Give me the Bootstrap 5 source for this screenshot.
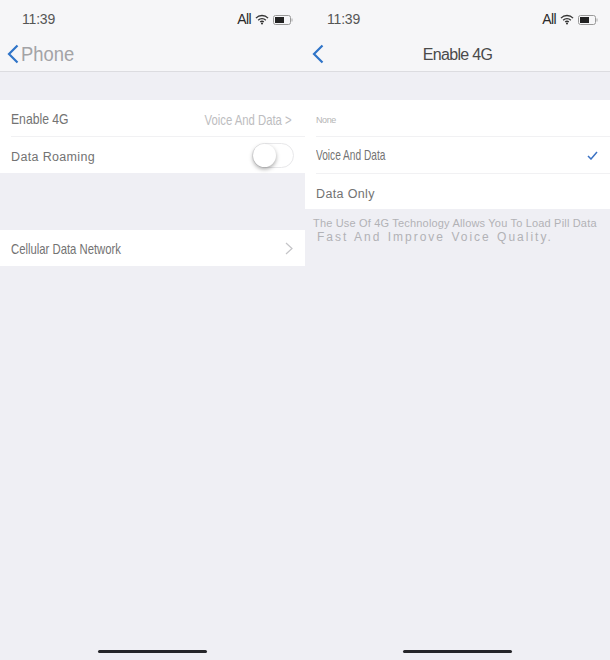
<!DOCTYPE html>
<html lang="en">
<head>
  <meta charset="UTF-8" />
  <meta name="viewport" content="width=device-width, initial-scale=1.0"/>
  <title>Enable 4G</title>
  <link href="https://cdn.jsdelivr.net/npm/bootstrap@5.3.3/dist/css/bootstrap.min.css" rel="stylesheet"/>
  <style>
    html, body { height: 660px; }
    body { background: #efeff4; font-family: "Liberation Sans", Arial, sans-serif; overflow: hidden; }
    .phone { width: 305px; height: 660px; background: #efeff4; }
    .top-bar { height: 72px; background: #f6f6f8; border-bottom: 1px solid #dcdce0; }
    .status-row { height: 36px; padding: 3px 12px 0 22px; }
    .clock { font-size: 14px; color: #555; letter-spacing: -.2px; }
    .carrier { font-size: 14px; color: #2a2a2a; margin-right: 4px; letter-spacing: -.6px; }
    .nav-row { height: 35px; padding: 0 0 0 7px; }
    .back-label { font-size: 20px; color: #a3a3a6; margin-left: 2px; line-height: 1; display: inline-block; transform: scaleX(.92); transform-origin: left center; }
    .nav-title { font-size: 16px; color: #4a4a4a; left: 0; right: 0; top: 7px; text-align: center; letter-spacing: -.7px; }
    .settings-group { background: #fff; }
    .first-group { margin-top: 28px; }
    .second-group { margin-top: 57px; }
    .setting-row { height: 36.500px; padding: 2px 12px 0 11px; font-size: 14.5px; color: #737373; position: relative; }
    .setting-row:first-child { height: 36px; }
    .setting-row + .setting-row::before { content: ""; position: absolute; top: 0; left: 11px; right: 0; border-top: 1px solid #f1f1f3; }
    .squeeze { display: inline-block; transform: scaleX(.78); transform-origin: left center; white-space: nowrap; padding-top: 2px; }
    .squeeze-mid { transform: scaleX(.84); }
    .squeeze-tight { transform: scaleX(.7); }
    .squeeze-end { display: inline-block; transform: scaleX(.78); transform-origin: right center; white-space: nowrap; padding-top: 3px; }
    .value-text { color: #bdbdc0; margin-right: 1px; }
    .note-text { font-size: 9px; color: #b5b5b5; letter-spacing: -.4px; padding-top: 4px; }
    .wide-text { letter-spacing: .35px; font-size: 12.500px; padding-top: 5px; }
    .caption-text { font-size: 11px; line-height: 14px; color: #b2b2b6; padding: 7px 6px 0 8px; letter-spacing: .18px; }
    .caption-text span { display: block; padding-left: 4px; font-size: 12px; letter-spacing: 2px; word-spacing: 1px; }
    .toggle-track { width: 42px; height: 25px; border: 1px solid #e8e8ea; border-radius: 13px; position: relative; margin-right: -1px; }
    .toggle-knob { width: 23px; height: 23px; background: #fff; border-radius: 50%; box-shadow: 0 2px 4px rgba(0,0,0,.35); position: absolute; top: 0; left: 0; }
    .home-bar { width: 109px; height: 3px; background: #26262a; border-radius: 2px; bottom: 7px; left: 98px; }
  </style>
</head>
<body>
  <div class="d-flex">

    <!-- Left screen -->
    <div class="phone position-relative">
      <div class="top-bar">
        <div class="status-row d-flex align-items-center justify-content-between">
          <span class="clock">11:39</span>
          <div class="d-flex align-items-center">
            <span class="carrier">All</span>
            <svg width="14" height="11" viewBox="0 0 15 11"><path d="M1 4a9 9 0 0 1 13 0M3.4 6.3a5.6 5.6 0 0 1 8.2 0M5.6 8.2a2.6 2.6 0 0 1 3.8 0" fill="none" stroke="#333" stroke-width="1.4"/><circle cx="7.5" cy="9.8" r="1.1" fill="#333"/></svg>
            <svg width="20" height="10" viewBox="0 0 20 10" class="ms-1"><rect x=".5" y=".5" width="17" height="9" rx="2" fill="none" stroke="#999"/><rect x="2" y="2" width="9" height="6" fill="#222"/><rect x="18.500" y="3.500" width="1" height="3" fill="#aaa"/></svg>
          </div>
        </div>
        <div class="nav-row d-flex align-items-center">
          <svg width="12" height="20" viewBox="0 0 12 20"><path d="M10.5 1.5 2 10l8.500 8.500" fill="none" stroke="#2f74c8" stroke-width="2.200"/></svg>
          <span class="back-label">Phone</span>
        </div>
      </div>
      <div class="settings-group first-group">
        <div class="setting-row d-flex align-items-center justify-content-between">
          <span class="squeeze squeeze-mid">Enable 4G</span>
          <span class="value-text squeeze-end">Voice And Data &gt;</span>
        </div>
        <div class="setting-row d-flex align-items-center justify-content-between">
          <span class="wide-text">Data Roaming</span>
          <div class="toggle-track"><div class="toggle-knob"></div></div>
        </div>
      </div>
      <div class="settings-group second-group">
        <div class="setting-row d-flex align-items-center justify-content-between">
          <span class="squeeze">Cellular Data Network</span>
          <svg width="8" height="13" viewBox="0 0 8 13"><path d="M1 1l6 5.500-6 5.500" fill="none" stroke="#c4c4c7" stroke-width="1.200"/></svg>
        </div>
      </div>
      <div class="home-bar position-absolute"></div>
    </div>

    <!-- Right screen -->
    <div class="phone position-relative">
      <div class="top-bar position-relative">
        <div class="status-row d-flex align-items-center justify-content-between">
          <span class="clock">11:39</span>
          <div class="d-flex align-items-center">
            <span class="carrier">All</span>
            <svg width="14" height="11" viewBox="0 0 15 11"><path d="M1 4a9 9 0 0 1 13 0M3.4 6.3a5.6 5.6 0 0 1 8.2 0M5.6 8.2a2.6 2.6 0 0 1 3.8 0" fill="none" stroke="#333" stroke-width="1.4"/><circle cx="7.5" cy="9.8" r="1.1" fill="#333"/></svg>
            <svg width="20" height="10" viewBox="0 0 20 10" class="ms-1"><rect x=".5" y=".5" width="17" height="9" rx="2" fill="none" stroke="#999"/><rect x="2" y="2" width="9" height="6" fill="#222"/><rect x="18.500" y="3.500" width="1" height="3" fill="#aaa"/></svg>
          </div>
        </div>
        <div class="nav-row d-flex align-items-center position-relative">
          <svg width="12" height="20" viewBox="0 0 12 20"><path d="M10.5 1.5 2 10l8.500 8.500" fill="none" stroke="#2f74c8" stroke-width="2.200"/></svg>
          <span class="nav-title position-absolute">Enable 4G</span>
        </div>
      </div>
      <div class="settings-group first-group">
        <div class="setting-row d-flex align-items-center">
          <span class="note-text">None</span>
        </div>
        <div class="setting-row d-flex align-items-center justify-content-between">
          <span class="squeeze squeeze-tight">Voice And Data</span>
          <svg width="11" height="9" viewBox="0 0 11 9"><path d="M1 5l3 3 6-7" fill="none" stroke="#3b72c4" stroke-width="1.500"/></svg>
        </div>
        <div class="setting-row d-flex align-items-center">
          <span class="wide-text">Data Only</span>
        </div>
      </div>
      <div class="caption-text">
        The Use Of 4G Technology Allows You To Load Pill Data
        <span>Fast And Improve Voice Quality.</span>
      </div>
      <div class="home-bar position-absolute"></div>
    </div>

  </div>
  <script src="https://cdn.jsdelivr.net/npm/bootstrap@5.3.3/dist/js/bootstrap.bundle.min.js"></script>
</body>
</html>
